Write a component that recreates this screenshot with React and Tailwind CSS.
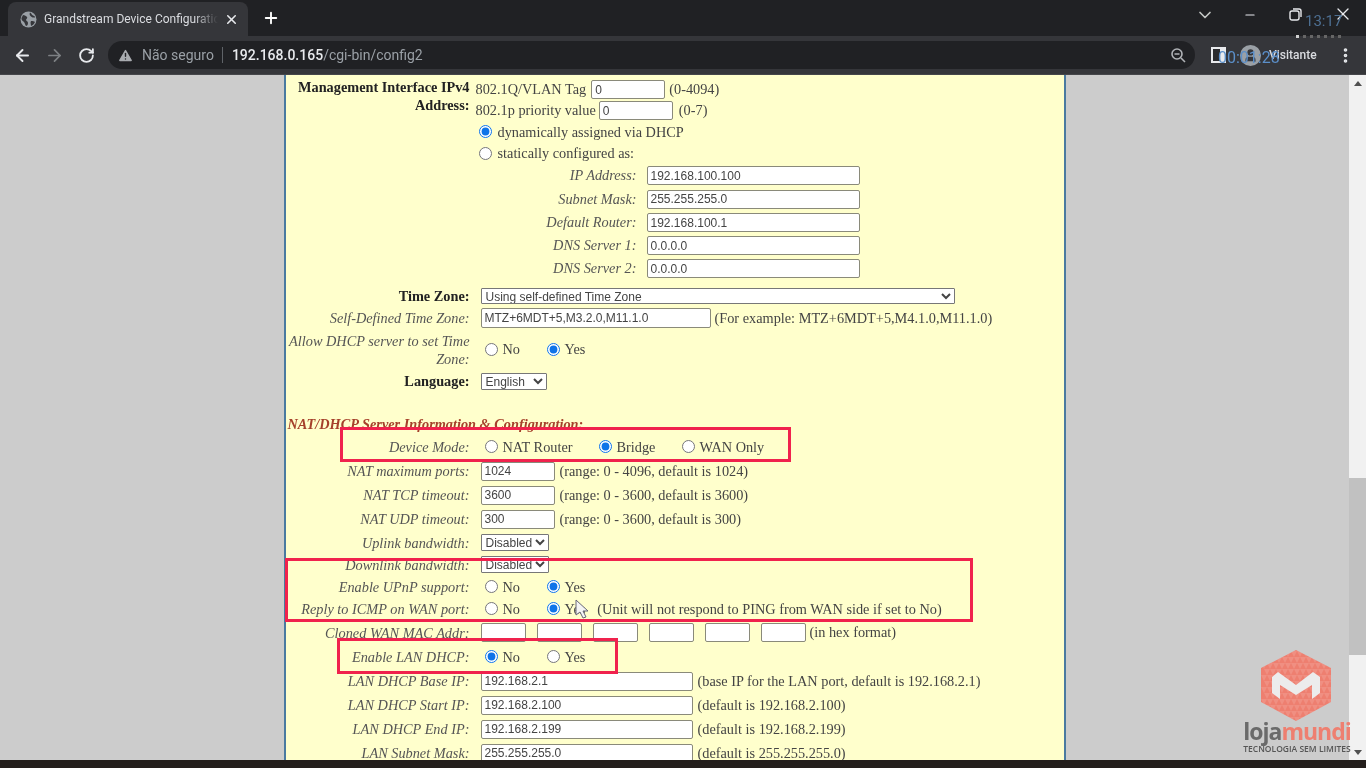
import React from "react";
import { ArrowLeft, ArrowRight, RotateCw, X, Plus, ChevronDown, Minus, TriangleAlert, EllipsisVertical, User } from "lucide-react";

const inputCls = "h-[19px] bg-white border border-[#8a8a7a] rounded-[2px] px-[3px] text-[12px] leading-none font-['Liberation_Sans',sans-serif] text-[#444] outline-none";
const selectCls = "bg-white border border-[#777] text-[12px] font-['Liberation_Sans',sans-serif] text-[#444] rounded-[1px]";

function Field({ w, value = "" }) {
  return <input readOnly value={value} className={`${inputCls} ${w}`} />;
}

function Radio({ checked, label, w, up, low, wide }) {
  return (
    <span className={`inline-flex items-center ${w || ""}`}>
      <input type="radio" readOnly checked={!!checked} className={`w-[13px] h-[13px] m-0 shrink-0 accent-[#0f74e8] ${wide ? "mr-[6px]" : "mr-[5px]"} ${up ? "mb-[2px]" : ""}`} />
      <span className={low ? "pt-[2px]" : ""}>{label}</span>
    </span>
  );
}

function Row({ h, label, children, bold }) {
  return (
    <div className={`flex items-center ${h}`}>
      <div className={`w-[184px] shrink-0 text-right leading-[18px] ${bold ? "font-bold text-[#222]" : "italic text-[#555]"}`}>{label}</div>
      <div className="ml-[11px] flex items-center min-w-0 whitespace-nowrap">{children}</div>
    </div>
  );
}

function SubRow({ h, label, children }) {
  return (
    <div className={`flex items-center ${h}`}>
      <div className="w-[161px] shrink-0 text-right italic text-[#555]">{label}</div>
      <div className="ml-[10px]">{children}</div>
    </div>
  );
}

function Logo() {
  const tris = [];
  for (let r = 0; r < 13; r++) {
    for (let c = 0; c < 13; c++) {
      const x = 1 + c * 6 + (r % 2 ? 3 : 0);
      const y = 1 + r * 6;
      tris.push(<path key={`${r}-${c}`} d={`M${x} ${y}l6 0l-3 6z`} fill="#ffffff" opacity="0.13" />);
    }
  }
  return (
    <svg width="72" height="72" viewBox="0 0 72 72" aria-hidden="true">
      <defs>
        <clipPath id="hexclip"><path d="M36 0L71 18V52L36 71L1 52V18Z" /></clipPath>
      </defs>
      <path d="M36 0L71 18V52L36 71L1 52V18Z" fill="#ee7f70" />
      <g clipPath="url(#hexclip)">{tris}</g>
      <path d="M18 22L36 35L53 22L60 27V43L52 49V35L36 45L20 35V49L12 43V27Z" fill="#ececec" />
    </svg>
  );
}

export default function App() {
  return (
    <div className="relative w-[1366px] h-[768px] overflow-hidden flex flex-col bg-[#202124] font-['Roboto',sans-serif] blur-[0.4px]">
      {/* tab strip */}
      <div className="h-[36px] shrink-0 flex items-end bg-[#202124] pl-[8px]">
        <div className="w-[240px] h-[34px] bg-[#35363a] rounded-t-[8px] flex items-center pl-[12px] pr-[8px] text-[#dadce0]">
          <svg width="17" height="17" viewBox="0 0 17 17" className="shrink-0" aria-hidden="true">
            <circle cx="8.5" cy="8.5" r="8" fill="#9aa0a6" />
            <path d="M3 4c2 0 3 1 4 2s-1 2-1 3 2 1 2 3-1 3-2 3c-1-1-1-3-2-4S1 9 1.5 7zM10 1.5c2 1 1 2 3 3s2 1 2 2c-2 0-3 0-4-1s-2-2-1-4zM11 10c2 0 3 0 4 1-1 2-2 3-4 4 0-2-1-3 0-5z" fill="#35363a" />
          </svg>
          <div className="relative ml-[7px] w-[174px] overflow-hidden whitespace-nowrap text-[12px]">
            Grandstream Device Configuration
            <div className="absolute right-0 top-0 bottom-0 w-[24px] bg-gradient-to-r from-transparent to-[#35363a]"></div>
          </div>
          <X size={15} strokeWidth={2.5} className="ml-[6px] text-[#e8eaed] shrink-0" />
        </div>
        <Plus size={18} strokeWidth={2.5} className="ml-[14px] mb-[9px] text-white" />
        <div className="flex-1"></div>
        <div className="flex items-center h-full text-[#c4c7c5]">
          <ChevronDown size={20} className="mr-[28px] mb-[6px]" />
          <Minus size={14} strokeWidth={2} className="mr-[32px] mb-[6px] text-[#e8eaed]" />
          <svg width="13" height="13" viewBox="0 0 13 13" className="mr-[31px] mb-[8px]" fill="none" stroke="#e8eaed" strokeWidth="1.4">
            <rect x="1" y="3" width="9" height="9" rx="2" />
            <path d="M4 1h6a2 2 0 0 1 2 2v6" />
          </svg>
          <X size={20} strokeWidth={1.6} className="mr-[13px] mb-[8px] text-[#e8eaed]" />
        </div>
      </div>

      {/* toolbar */}
      <div className="h-[38px] shrink-0 bg-[#35363a] flex items-center pl-[13px] border-b border-[#45464a] box-content">
        <ArrowLeft size={19} strokeWidth={2.4} className="shrink-0 text-[#e8eaed]" />
        <ArrowRight size={19} strokeWidth={2.2} className="shrink-0 ml-[13px] text-[#7d8084]" />
        <RotateCw size={17} strokeWidth={2.6} className="shrink-0 ml-[14px] text-[#e8eaed]" />
        <div className="shrink-0 ml-[13px] w-[1087px] h-[28px] rounded-full bg-[#202124] flex items-center pl-[9px] pr-[9px]">
          <TriangleAlert size={17} className="text-[#202124] fill-[#a8abaf]" />
          <span className="ml-[8px] text-[14px] text-[#9aa0a6]">Não seguro</span>
          <span className="ml-[8px] w-px h-[16px] bg-[#5f6368]"></span>
          <span className="ml-[9px] text-[14px] font-medium text-[#e8eaed]">192.168.0.165<span className="font-normal text-[#9aa0a6]">/cgi-bin/config2</span></span>
          <span className="flex-1"></span>
          <svg width="16" height="16" viewBox="0 0 16 16" fill="none" stroke="#b0b3b7" strokeWidth="1.6">
            <circle cx="7" cy="7" r="5" /><path d="M4.5 7h5M11 11l4 4" />
          </svg>
        </div>
        <div className="shrink-0 ml-[16px] w-[15px] h-[16px] bg-[#e8eaed] border-[2px] border-[#e8eaed] flex">
          <span className="w-[7px] h-full bg-[#2a2b2e]"></span>
        </div>
        <div className="shrink-0 ml-[-8px] w-[109px] h-[26px] rounded-full bg-transparent flex items-center pl-[22px]">
          <span className="w-[21px] h-[21px] rounded-full bg-[#9aa0a6] flex items-center justify-center shrink-0">
            <User size={15} className="text-[#35363a] fill-[#35363a]" />
          </span>
          <span className="ml-[8px] text-[12px] font-medium text-[#dadce0]">Visitante</span>
        </div>
        <EllipsisVertical size={19} strokeWidth={2.6} className="shrink-0 ml-[9px] text-[#e8eaed]" />
      </div>

      {/* page */}
      <div className="flex-1 min-h-0 flex bg-[#cccccc]">
        <div className="flex-1 min-w-0 overflow-hidden">
          <div className="mx-auto w-[782px] h-full bg-[#ffffcc] border-x-2 border-[#4a7aa0] pt-[4px] text-[14.3px] leading-none font-['Liberation_Serif',serif] text-[#444] overflow-hidden">
            <div className="flex">
              <div className="w-[184px] mt-[-1px] shrink-0 text-right font-bold text-[#222] leading-[18px]">
                Management Interface IPv4 Address:
              </div>
              <div className="ml-[6px] flex flex-col">
                <div className="flex items-center h-[21px]">802.1Q/VLAN Tag<Field w="w-[74px] ml-[5px]" value="0" /><span className="ml-[4px]">(0-4094)</span></div>
                <div className="flex items-center h-[21px]">802.1p priority value<Field w="w-[74px] ml-[3px]" value="0" /><span className="ml-[6px]">(0-7)</span></div>
                <div className="flex items-center h-[22px] pl-[3px]"><Radio wide checked label="dynamically assigned via DHCP" /></div>
                <div className="flex items-center h-[21px] pl-[3px]"><Radio wide label="statically configured as:" /></div>
                <SubRow h="h-[23px]" label="IP Address:"><Field w="w-[213px]" value="192.168.100.100" /></SubRow>
                <SubRow h="h-[24px]" label="Subnet Mask:"><Field w="w-[213px]" value="255.255.255.0" /></SubRow>
                <SubRow h="h-[23px]" label="Default Router:"><Field w="w-[213px]" value="192.168.100.1" /></SubRow>
                <SubRow h="h-[23px]" label="DNS Server 1:"><Field w="w-[213px]" value="0.0.0.0" /></SubRow>
                <SubRow h="h-[23px]" label="DNS Server 2:"><Field w="w-[213px]" value="0.0.0.0" /></SubRow>
              </div>
            </div>
            <div className="h-[5px]"></div>
            <Row h="h-[22px]" bold label="Time Zone:">
              <select className={`w-[474px] h-[16px] ${selectCls}`}>
                <option>Using self-defined Time Zone</option>
              </select>
            </Row>
            <Row h="h-[22px]" label="Self-Defined Time Zone:">
              <Field w="w-[230px] !h-[20px]" value="MTZ+6MDT+5,M3.2.0,M11.1.0" />
              <span className="ml-[4px]">(For example: MTZ+6MDT+5,M4.1.0,M11.1.0)</span>
            </Row>
            <Row h="h-[41px]" label="Allow DHCP server to set Time Zone:">
              <span className="pl-[4px] flex"><Radio label="No" w="w-[62px]" /><Radio checked label="Yes" /></span>
            </Row>
            <Row h="h-[22px]" bold label="Language:">
              <select className={`w-[66px] h-[17px] ${selectCls}`}>
                <option>English</option>
              </select>
            </Row>
            <div className="h-[22px]"></div>
            <div className="h-[21px] flex items-center pl-[2px] italic font-bold text-[#a5402a]">NAT/DHCP Server Information &amp; Configuration:</div>
            <Row h="h-[24px]" label="Device Mode:">
              <span className="pl-[4px] flex"><Radio up label="NAT Router" w="w-[114px]" /><Radio up checked label="Bridge" w="w-[83px]" /><Radio up label="WAN Only" /></span>
            </Row>
            <Row h="h-[24px]" label="NAT maximum ports:"><Field w="w-[74px]" value="1024" /><span className="ml-[5px]">(range: 0 - 4096, default is 1024)</span></Row>
            <Row h="h-[24px]" label="NAT TCP timeout:"><Field w="w-[74px]" value="3600" /><span className="ml-[5px]">(range: 0 - 3600, default is 3600)</span></Row>
            <Row h="h-[24px]" label="NAT UDP timeout:"><Field w="w-[74px]" value="300" /><span className="ml-[5px]">(range: 0 - 3600, default is 300)</span></Row>
            <Row h="h-[23px]" label="Uplink bandwidth:">
              <select className={`w-[68px] h-[17px] ${selectCls}`}><option>Disabled</option></select>
            </Row>
            <Row h="h-[21px]" label="Downlink bandwidth:">
              <select className={`w-[68px] h-[17px] ${selectCls}`}><option>Disabled</option></select>
            </Row>
            <Row h="h-[23px]" label="Enable UPnP support:">
              <span className="pl-[4px] flex"><Radio low label="No" w="w-[62px]" /><Radio low checked label="Yes" /></span>
            </Row>
            <Row h="h-[22px]" label="Reply to ICMP on WAN port:">
              <span className="pl-[4px] flex"><Radio label="No" w="w-[62px]" /><Radio checked label="Yes" /><span className="ml-[12px]">(Unit will not respond to PING from WAN side if set to No)</span></span>
            </Row>
            <Row h="h-[25px]" label="Cloned WAN MAC Addr:">
              <span className="flex items-center gap-[11px]">
                <Field w="w-[45px]" /><Field w="w-[45px]" /><Field w="w-[45px]" /><Field w="w-[45px]" /><Field w="w-[45px]" /><Field w="w-[45px]" />
                <span className="ml-[-7px]">(in hex format)</span>
              </span>
            </Row>
            <Row h="h-[24px]" label="Enable LAN DHCP:">
              <span className="pl-[4px] flex"><Radio up checked label="No" w="w-[62px]" /><Radio up label="Yes" /></span>
            </Row>
            <Row h="h-[24px]" label="LAN DHCP Base IP:"><Field w="w-[212px]" value="192.168.2.1" /><span className="ml-[5px]">(base IP for the LAN port, default is 192.168.2.1)</span></Row>
            <Row h="h-[24px]" label="LAN DHCP Start IP:"><Field w="w-[212px]" value="192.168.2.100" /><span className="ml-[5px]">(default is 192.168.2.100)</span></Row>
            <Row h="h-[24px]" label="LAN DHCP End IP:"><Field w="w-[212px]" value="192.168.2.199" /><span className="ml-[5px]">(default is 192.168.2.199)</span></Row>
            <Row h="h-[24px]" label="LAN Subnet Mask:"><Field w="w-[212px]" value="255.255.255.0" /><span className="ml-[5px]">(default is 255.255.255.0)</span></Row>
          </div>
        </div>
        {/* scrollbar */}
        <div className="w-[17px] shrink-0 bg-[#f1f1f1] flex flex-col items-center">
          <div className="h-[16px] flex items-center"><div className="w-0 h-0 border-x-[4px] border-x-transparent border-b-[5px] border-b-[#505050]"></div></div>
          <div className="h-[387px]"></div>
          <div className="w-full h-[177px] bg-[#c1c1c1]"></div>
          <div className="flex-1"></div>
          <div className="h-[16px] flex items-center"><div className="w-0 h-0 border-x-[4px] border-x-transparent border-t-[5px] border-t-[#505050]"></div></div>
        </div>
      </div>
      <div className="h-[8px] shrink-0 bg-[#241f1c]"></div>

      {/* annotation boxes */}
      <div className="absolute left-[340px] top-[427px] w-[451px] h-[35px] border-[3px] border-[#f0224d]"></div>
      <div className="absolute left-[285px] top-[558px] w-[688px] h-[64px] border-[3px] border-[#f0224d]"></div>
      <div className="absolute left-[337px] top-[638px] w-[281px] h-[36px] border-[3px] border-[#f0224d]"></div>

      {/* cursor */}
      <svg className="absolute left-[575px] top-[599px]" width="14" height="21" viewBox="0 0 14 21" aria-hidden="true">
        <path d="M1 1v15l4-3 3 6 3-1-3-6h5z" fill="#f4f4f4" stroke="#667" strokeWidth="1" />
      </svg>

      {/* video overlays */}
      <div className="absolute left-[1305px] top-[10px] text-[15px] text-[#4d6f92]">13:17</div>
      <div className="absolute left-[1296px] top-[35px] flex gap-[4px]">
        <span className="w-[3px] h-[3px] bg-[#d0d0d0]"></span>
        <span className="w-[3px] h-[3px] bg-[#666]"></span><span className="w-[3px] h-[3px] bg-[#666]"></span><span className="w-[3px] h-[3px] bg-[#666]"></span><span className="w-[3px] h-[3px] bg-[#666]"></span><span className="w-[3px] h-[3px] bg-[#666]"></span><span className="w-[3px] h-[3px] bg-[#666]"></span>
      </div>
      <div className="absolute left-[1218px] top-[46px] text-[16px] text-[#5b8fc9]">00:01:28</div>

      {/* watermark */}
      <div className="absolute left-[1238px] top-[650px] w-[118px] flex flex-col items-center">
        <div className="mr-[2px] flex"><Logo /></div>
        <div className="mt-[-3px] text-[23px] leading-[24px] font-['Open_Sans',sans-serif] font-bold tracking-[-1px] text-[#6a6a6a] whitespace-nowrap">
          loja<span className="text-[#ee7f70]">mundi</span>
        </div>
        <div className="mt-[0px] text-[8.5px] leading-[11px] font-['Open_Sans',sans-serif] font-semibold text-[#555] whitespace-nowrap">TECNOLOGIA SEM LIMITES</div>
      </div>
    </div>
  );
}
